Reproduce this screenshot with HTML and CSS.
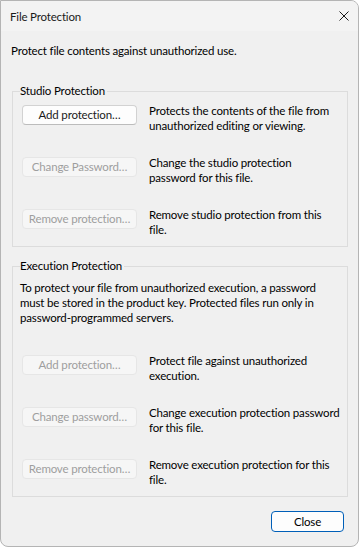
FILE: index.html
```html
<!DOCTYPE html>
<html>
<head>
<meta charset="utf-8">
<link rel="stylesheet" href="styles.css">
</head>
<body>
<div class="window">
  <div class="titlebar">
    <span class="title">File Protection</span>
    <svg class="close-x" width="10" height="10" viewBox="0 0 10 10"><path d="M0.5 0.5 L9.5 9.5 M9.5 0.5 L0.5 9.5" stroke="#1a1a1a" stroke-width="1" fill="none"/></svg>
  </div>
  <div class="content">
    <p class="intro">Protect file contents against unauthorized use.</p>
    <fieldset class="group group-studio">
      <legend>Studio Protection</legend>
      <div class="row">
        <button class="btn">Add protection…</button>
        <div class="desc">Protects the contents of the file from unauthorized editing or viewing.</div>
      </div>
      <div class="row">
        <button class="btn" disabled>Change Password…</button>
        <div class="desc">Change the studio protection password for this file.</div>
      </div>
      <div class="row">
        <button class="btn" disabled>Remove protection…</button>
        <div class="desc">Remove studio protection from this file.</div>
      </div>
    </fieldset>
    <fieldset class="group group-exec">
      <legend>Execution Protection</legend>
      <p class="para">To protect your file from unauthorized execution, a password must be stored in the product key. Protected files run only in password-programmed servers.</p>
      <div class="row">
        <button class="btn" disabled>Add protection…</button>
        <div class="desc">Protect file against unauthorized execution.</div>
      </div>
      <div class="row">
        <button class="btn" disabled>Change password…</button>
        <div class="desc">Change execution protection password for this file.</div>
      </div>
      <div class="row">
        <button class="btn" disabled>Remove protection…</button>
        <div class="desc">Remove execution protection for this file.</div>
      </div>
    </fieldset>
    <div class="footer">
      <button class="btn btn-close">Close</button>
    </div>
  </div>
</div>
</body>
</html>
```

FILE: styles.css
```css
html, body {
  margin: 0;
  padding: 0;
  background: #ffffff;
}
body {
  font-family: "Segoe UI", Lato, sans-serif;
  font-size: 11.5px;
  letter-spacing: -0.17px;
  line-height: 15px;
  color: #000;
}
.window {
  width: 359px;
  height: 547px;
  box-sizing: border-box;
  border: 1px solid #b4b4b4;
  border-radius: 0 8px 8px 8px;
  background: #f0f0f0;
  overflow: hidden;
  display: flex;
  flex-direction: column;
}
.titlebar {
  height: 30px;
  flex: none;
  background: #f3f3f3;
  display: flex;
  align-items: center;
  justify-content: space-between;
  padding: 0 10px 0 9px;
}
.title {
  color: #1a1a1a;
  margin-top: 1px;
}
.close-x {
  display: block;
  margin-right: -1px;
}
.content {
  padding: 0 10px 0 11px;
  display: flex;
  flex-direction: column;
}
.intro {
  margin: 12px 0 0 -1px;
}
.group {
  margin: 25px 0 0 0;
  border: 1px solid #dcdcdc;
  padding: 6px 0 5px 9px;
  min-width: 0;
}
.group legend {
  padding: 0 2px 0 0;
  margin-left: -2px;
  line-height: 16px;
}
.group-exec {
  margin-top: 11px;
}
.row {
  display: flex;
  align-items: flex-start;
  gap: 12px;
  height: 32px;
}
.row + .row {
  margin-top: 20px;
}
.para {
  margin: 0 9px 30px -2px;
}
.btn {
  font: inherit;
  letter-spacing: inherit;
  white-space: nowrap;
  width: 115px;
  height: 20px;
  flex: none;
  box-sizing: border-box;
  padding: 0;
  border: 1px solid #d2d2d2;
  border-bottom-color: #bcbcbc;
  border-radius: 4px;
  background: #fdfdfd;
  color: #1a1a1a;
  line-height: 16px;
}
.btn:disabled {
  background: #f6f6f6;
  border-color: #e6e6e6;
  color: #9e9e9e;
}
.desc {
  margin-top: -2px;
  width: 198px;
}
.group-studio .desc {
  width: 189px;
}
.footer {
  display: flex;
  justify-content: flex-end;
  padding-right: 4px;
  margin-top: 14px;
}
.btn-close {
  width: 73px;
  height: 21px;
  border: 1px solid #005fb8;
  color: #000;
}
```
